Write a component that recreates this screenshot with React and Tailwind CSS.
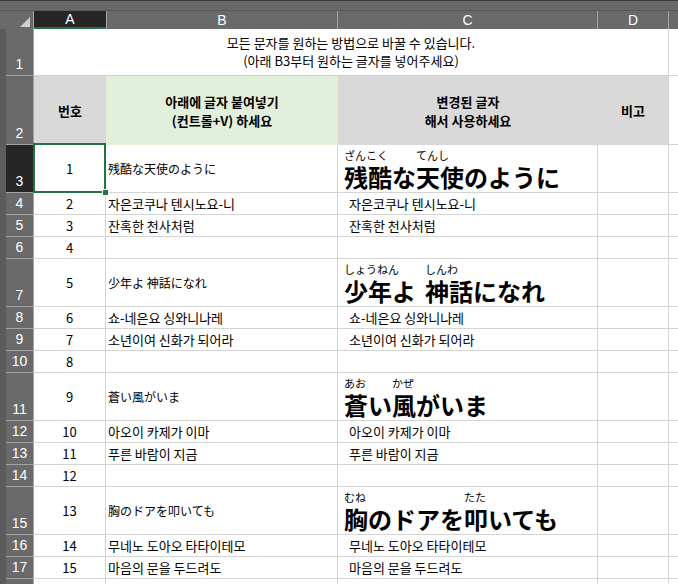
import React from "react";

const KR = "font-['Noto_Sans_CJK_KR','Noto_Sans_CJK_JP',sans-serif]";
const JP = "font-['Noto_Sans_CJK_JP','Noto_Sans_CJK_KR',sans-serif]";
const UI = "font-['Liberation_Sans','Noto_Sans',sans-serif]";

const rows = [
  { n: 3, tall: true, a: "1", b: "残酷な天使のように", ruby: [["残酷", "ざんこく"], ["な"], ["天使", "てんし"], ["のように"]] },
  { n: 4, a: "2", b: "자은코쿠나 텐시노요-니", c: "자은코쿠나 텐시노요-니" },
  { n: 5, a: "3", b: "잔혹한 천사처럼", c: "잔혹한 천사처럼" },
  { n: 6, a: "4" },
  { n: 7, tall: true, a: "5", b: "少年よ 神話になれ", ruby: [["少年", "しょうねん"], ["よ"], [" "], ["神話", "しんわ"], ["になれ"]] },
  { n: 8, a: "6", b: "쇼-네은요 싱와니나레", c: "쇼-네은요 싱와니나레" },
  { n: 9, a: "7", b: "소년이여 신화가 되어라", c: "소년이여 신화가 되어라" },
  { n: 10, a: "8" },
  { n: 11, tall: true, a: "9", b: "蒼い風がいま", ruby: [["蒼", "あお"], ["い"], ["風", "かぜ"], ["がいま"]] },
  { n: 12, a: "10", b: "아오이 카제가 이마", c: "아오이 카제가 이마" },
  { n: 13, a: "11", b: "푸른 바람이 지금", c: "푸른 바람이 지금" },
  { n: 14, a: "12" },
  { n: 15, tall: true, a: "13", b: "胸のドアを叩いても", ruby: [["胸", "むね"], ["のドアを"], ["叩", "たた"], ["いても"]] },
  { n: 16, a: "14", b: "무네노 도아오 타타이테모", c: "무네노 도아오 타타이테모" },
  { n: 17, a: "15", b: "마음의 문을 두드려도", c: "마음의 문을 두드려도" },
  { n: 18, hidden: true },
];

function RowHead({ n, selected }) {
  return (
    <div className="flex w-[34px] shrink-0">
      <div className="w-[6px] bg-[#5c5c5c]" />
      <div
        className={`flex flex-1 items-end justify-center pb-[3px] text-[14px] leading-[15px] text-white border-b border-r border-[#a3a3a3] ${UI} ${
          selected ? "bg-[#262626]" : "bg-[#6a6a6a]"
        }`}
      >
        {n}
      </div>
    </div>
  );
}

function Ruby({ parts }) {
  return (
    <div className={`flex items-end font-bold text-[24px] leading-[24px] ${JP}`}>
      {parts.map(([base, kana], i) => (
        <div key={i} className="flex flex-col">
          <span className="h-[15px] w-0 whitespace-nowrap text-[11px] leading-[11px] font-normal">{kana}</span>
          {base === " " ? <span className="w-[9px]" /> : <span className="whitespace-nowrap">{base}</span>}
        </div>
      ))}
    </div>
  );
}

function DataRow({ r }) {
  const h = r.tall ? "h-[48px]" : "h-[22px]";
  const isJp = !!r.ruby;
  return (
    <div className={`flex ${h}`}>
      <RowHead n={r.hidden ? "" : r.n} selected={r.n === 3} />
      <div className={`relative flex w-[72px] shrink-0 items-center justify-center border-b border-r border-[#d4d4d4] text-[13px] ${KR}`}>
        {r.a}
        {r.n === 3 && (
          <div className="absolute -left-[1px] -top-[2px] -right-[1px] -bottom-[1px] z-10 border-2 border-[#217346]">
            <div className="absolute -right-[5px] -bottom-[5px] h-[7px] w-[7px] bg-[#217346] border border-white" />
          </div>
        )}
      </div>
      <div
        className={`flex w-[232px] shrink-0 items-center overflow-hidden whitespace-nowrap border-b border-r border-[#d4d4d4] pl-[2px] ${
          isJp ? `text-[12px] ${JP}` : `text-[13px] ${KR}`
        }`}
      >
        {r.b}
      </div>
      {isJp ? (
        <div className="flex w-[260px] shrink-0 items-start border-b border-r border-[#d4d4d4] pl-[6px] pt-[5px]">
          <Ruby parts={r.ruby} />
        </div>
      ) : (
        <div className={`flex w-[260px] shrink-0 items-center whitespace-nowrap border-b border-r border-[#d4d4d4] pl-[11px] text-[13px] ${KR}`}>
          {r.c}
        </div>
      )}
      <div className="w-[71px] shrink-0 border-b border-r border-[#d4d4d4]" />
      <div className="flex-1 border-b border-[#d4d4d4]" />
    </div>
  );
}

export default function App() {
  return (
    <div className={`h-[584px] w-[678px] overflow-hidden bg-white text-black ${KR}`}>
      <div className="h-[11px] border-t border-b border-t-[#3a3a3a] border-b-[#585858] bg-[#686868]" />
      <div className={`flex h-[18px] text-[14px] leading-[16px] text-white ${UI}`}>
        <div className="flex w-[34px] shrink-0 items-end justify-end bg-[#6a6a6a] border-r border-[#a3a3a3] pb-[2px] pr-[3px]">
          <svg width="10" height="10" viewBox="0 0 10 10">
            <polygon points="10,0 10,10 0,10" fill="#d0d0d0" />
          </svg>
        </div>
        <div className="flex w-[72px] shrink-0 items-center justify-center bg-[#262626] border-b-2 border-[#217346]">A</div>
        <div className="flex w-[232px] shrink-0 items-center justify-center bg-[#6a6a6a] border-l border-r border-[#a3a3a3]">B</div>
        <div className="flex w-[260px] shrink-0 items-center justify-center bg-[#6a6a6a] border-r border-[#a3a3a3]">C</div>
        <div className="flex w-[71px] shrink-0 items-center justify-center bg-[#6a6a6a] border-r border-[#a3a3a3]">D</div>
        <div className="flex-1 bg-[#6a6a6a]" />
      </div>

      <div className="flex h-[47px]">
        <RowHead n={1} />
        <div className="flex w-[635px] shrink-0 flex-col items-center justify-center border-b border-r border-[#d4d4d4] text-[13px] leading-[18px]">
          <span>모든 문자를 원하는 방법으로 바꿀 수 있습니다.</span>
          <span>(아래 B3부터 원하는 글자를 넣어주세요)</span>
        </div>
        <div className="flex-1 border-b border-[#d4d4d4]" />
      </div>

      <div className="flex h-[69px]">
        <RowHead n={2} />
        <div className="flex w-[72px] shrink-0 items-center justify-center bg-[#d9d9d9] text-[13px] font-bold">번호</div>
        <div className="flex w-[232px] shrink-0 flex-col items-center justify-center bg-[#e2efda] text-[13px] font-bold leading-[19px]">
          <span>아래에 글자 붙여넣기</span>
          <span>(컨트롤+V) 하세요</span>
        </div>
        <div className="flex w-[260px] shrink-0 flex-col items-center justify-center bg-[#d9d9d9] text-[13px] font-bold leading-[19px]">
          <span>변경된 글자</span>
          <span>해서 사용하세요</span>
        </div>
        <div className="flex w-[71px] shrink-0 items-center justify-center border-r border-[#d4d4d4] bg-[#d9d9d9] text-[13px] font-bold">비고</div>
        <div className="flex-1 border-b border-[#d4d4d4]" />
      </div>

      {rows.map((r) => (
        <DataRow key={r.n} r={r} />
      ))}
    </div>
  );
}
